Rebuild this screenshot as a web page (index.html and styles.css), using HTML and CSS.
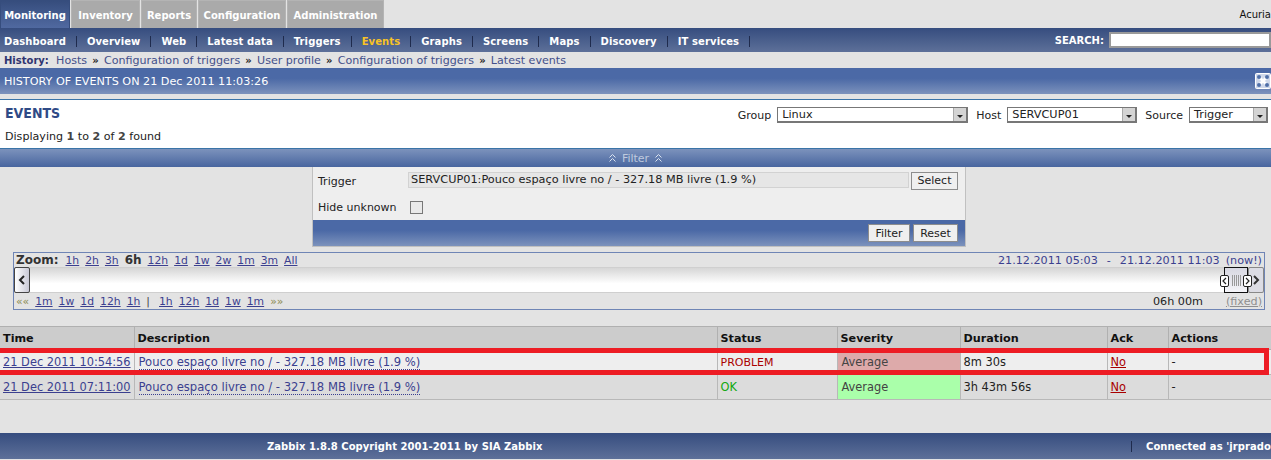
FILE: index.html
```html
<!DOCTYPE html>
<html lang="en">
<head>
  <meta charset="UTF-8">
  <title>History of events</title>
  <link rel="stylesheet" href="styles.css">
</head>
<body>
  <div class="top">
    <div class="tabs">
      <a class="tab activo" href="#">Monitoring</a>
      <a class="tab t-inventory" href="#">Inventory</a>
      <a class="tab t-reports" href="#">Reports</a>
      <a class="tab t-config" href="#">Configuration</a>
      <a class="tab t-admin" href="#">Administration</a>
    </div>
    <span class="empresa">Acuria</span>
  </div>

  <div class="subnav">
    <div class="menu">
      <a href="#">Dashboard</a>
      <a href="#">Overview</a>
      <a href="#">Web</a>
      <a href="#">Latest data</a>
      <a href="#">Triggers</a>
      <a class="actual" href="#">Events</a>
      <a href="#">Graphs</a>
      <a href="#">Screens</a>
      <a href="#">Maps</a>
      <a href="#">Discovery</a>
      <a href="#">IT services</a>
    </div>
    <div class="search">
      <label>SEARCH:</label>
      <input type="text">
    </div>
  </div>

  <div class="history">
    <strong>History:</strong>
    <a href="#">Hosts</a><b>»</b>
    <a href="#">Configuration of triggers</a><b>»</b>
    <a href="#">User profile</a><b>»</b>
    <a href="#">Configuration of triggers</a><b>»</b>
    <a href="#">Latest events</a>
  </div>

  <div class="titlebar">
    <span>HISTORY OF EVENTS ON 21 Dec 2011 11:03:26</span>
    <svg class="fullscreen" width="16" height="16" viewBox="0 0 16 16">
      <rect x="0.5" y="0.5" width="15" height="15" rx="1" fill="#cfd8ea" stroke="#fff"/>
      <path d="M3 3l10 10M13 3L3 13" stroke="#fff" stroke-width="2.500"/>
      <circle cx="4" cy="4" r="2" fill="#4f6fa8"/>
      <circle cx="12" cy="4" r="2" fill="#4f6fa8"/>
      <circle cx="4" cy="12" r="2" fill="#4f6fa8"/>
      <circle cx="12" cy="12" r="2" fill="#4f6fa8"/>
    </svg>
  </div>

  <div class="header">
    <div class="header-top">
      <h1>EVENTS</h1>
      <div class="selects">
        <label>Group</label>
        <div class="combo combo-group"><span>Linux</span><i></i></div>
        <label>Host</label>
        <div class="combo combo-host"><span>SERVCUP01</span><i></i></div>
        <label>Source</label>
        <div class="combo combo-source"><span>Trigger</span><i></i></div>
      </div>
    </div>
    <p class="found">Displaying <b>1</b> to <b>2</b> of <b>2</b> found</p>
  </div>

  <div class="filterbar">
    <svg width="7" height="8" viewBox="0 0 7 8"><path d="M.5 3.500l3-3 3 3M.5 7.500l3-3 3 3" fill="none" stroke="#dbe3f0"/></svg>
    <span>Filter</span>
    <svg width="7" height="8" viewBox="0 0 7 8"><path d="M.5 3.500l3-3 3 3M.5 7.500l3-3 3 3" fill="none" stroke="#dbe3f0"/></svg>
  </div>

  <div class="filterbox">
    <div class="filter-row fila-trigger">
      <label>Trigger</label>
      <div class="trigger-input">SERVCUP01:Pouco espaço livre no / - 327.18 MB livre (1.9 %)</div>
      <button class="btn">Select</button>
    </div>
    <div class="filter-row">
      <label>Hide unknown</label>
      <span class="check"></span>
    </div>
    <div class="filter-foot">
      <button class="btn">Filter</button>
      <button class="btn">Reset</button>
    </div>
  </div>

  <div class="zoombox">
    <div class="zoom-row fila-alta">
      <div class="zoom-links">
        <b class="zoom-label">Zoom:</b>
        <a href="#">1h</a><a href="#">2h</a><a href="#">3h</a><b class="zoom-on">6h</b><a href="#">12h</a><a href="#">1d</a><a href="#">1w</a><a href="#">2w</a><a href="#">1m</a><a href="#">3m</a><a href="#">All</a>
      </div>
      <div class="fechas"><span>21.12.2011 05:03</span><span class="guion">-</span><span>21.12.2011 11:03</span><a href="#">(now!)</a></div>
    </div>
    <div class="scroll">
      <div class="arrow arrow-left">
        <svg width="8" height="10" viewBox="0 0 8 10"><path d="M6 1L2 5l4 4" fill="none" stroke="#222" stroke-width="2"/></svg>
      </div>
      <div class="arrow arrow-right">
        <svg width="8" height="10" viewBox="0 0 8 10"><path d="M2 1l4 4-4 4" fill="none" stroke="#333" stroke-width="2"/></svg>
      </div>
      <div class="thumb">
        <span class="grip grip-l"><svg width="5" height="8" viewBox="0 0 5 8"><path d="M4 1L1 4l3 3" fill="none" stroke="#222" stroke-width="1.200"/></svg></span>
        <span class="grip grip-r"><svg width="5" height="8" viewBox="0 0 5 8"><path d="M1 1l3 3-3 3" fill="none" stroke="#222" stroke-width="1.200"/></svg></span>
      </div>
    </div>
    <div class="zoom-row fila-baja">
      <div class="zoom-links">
        <span class="raquo">««</span>
        <a href="#">1m</a><a href="#">1w</a><a href="#">1d</a><a href="#">12h</a><a href="#">1h</a><span class="sep">|</span><a href="#">1h</a><a href="#">12h</a><a href="#">1d</a><a href="#">1w</a><a href="#">1m</a>
        <span class="raquo">»»</span>
      </div>
      <div class="periodo"><span>06h 00m</span><a href="#">(fixed)</a></div>
    </div>
  </div>

  <table class="eventos">
    <colgroup>
      <col class="c-time"><col class="c-desc"><col class="c-status"><col class="c-sev"><col class="c-dur"><col class="c-ack"><col>
    </colgroup>
    <thead>
      <tr><th>Time</th><th>Description</th><th>Status</th><th>Severity</th><th>Duration</th><th>Ack</th><th>Actions</th></tr>
    </thead>
    <tbody>
      <tr class="par">
        <td><a href="#">21 Dec 2011 10:54:56</a></td>
        <td class="desc"><a class="punteado" href="#">Pouco espaço livre no / - 327.18 MB livre (1.9 %)</a></td>
        <td class="problem">PROBLEM</td>
        <td class="sev-rojo">Average</td>
        <td>8m 30s</td>
        <td><a class="rojo" href="#">No</a></td>
        <td>-</td>
      </tr>
      <tr>
        <td><a href="#">21 Dec 2011 07:11:00</a></td>
        <td class="desc"><a class="punteado" href="#">Pouco espaço livre no / - 327.18 MB livre (1.9 %)</a></td>
        <td class="ok">OK</td>
        <td class="sev-verde">Average</td>
        <td>3h 43m 56s</td>
        <td><a class="rojo" href="#">No</a></td>
        <td>-</td>
      </tr>
    </tbody>
  </table>

  <div class="marca"></div>

  <div class="footer">
    <span class="copy">Zabbix 1.8.8 Copyright 2001-2011 by SIA Zabbix</span>
    <span class="conectado">Connected as 'jrprado</span>
  </div>
</body>
</html>
```

FILE: styles.css
```css
html, body {
  margin: 0;
  height: 460px;
  overflow: hidden;
}

body {
  position: relative;
  background: #e3e3e3;
  font-family: "DejaVu Sans", Verdana, sans-serif;
  font-size: 11px;
  color: #222;
}

a {
  color: #3b3f8f;
}

/* Tabs */
.top {
  height: 28px;
  display: flex;
  justify-content: space-between;
}

.tabs {
  display: flex;
  gap: 1px;
}

.tab {
  display: block;
  box-sizing: border-box;
  height: 28px;
  line-height: 29px;
  text-align: center;
  background: #aaaaaa;
  border: 1px solid #b4b4b4;
  border-bottom: 0;
  color: #fff;
  font-weight: bold;
  text-decoration: none;
  font-size: 10px;
}

.activo {
  background: linear-gradient(#364d7d, #5069a0);
  border-color: #364d7d;
  width: 70px;
}

.t-inventory { width: 69px; }
.t-reports { width: 56px; }
.t-config { width: 88px; }
.t-admin { width: 97px; }

.empresa {
  margin-top: 9px;
  white-space: nowrap;
  font-size: 10px;
  color: #111;
}

/* Submenu */
.subnav {
  height: 24px;
  background: linear-gradient(#364d7f, #5d7099);
  display: flex;
  justify-content: space-between;
  align-items: center;
}

.menu {
  display: flex;
  padding-top: 2px;
}

.menu a {
  color: #fff;
  font-weight: bold;
  text-decoration: none;
  font-size: 10px;
  letter-spacing: 0.1px;
  line-height: 11px;
  padding: 0 10px;
  border-right: 1px solid #1f2b4d;
}

.menu a:first-child {
  padding-left: 4px;
}

.menu a.actual {
  color: #f8c325;
}

.search {
  display: flex;
  align-items: center;
  gap: 5px;
}

.search label {
  color: #fff;
  font-weight: bold;
  font-size: 10px;
}

.search input {
  box-sizing: border-box;
  width: 162px;
  height: 16px;
  margin: 0;
  padding: 0;
  border: 2px solid #9a9a9a;
  background: #fff;
}

/* Historial */
.history {
  height: 16px;
  line-height: 17px;
  padding-left: 4px;
  white-space: nowrap;
  display: flex;
  gap: 5.200px;
  font-size: 11.100px;
}

.history strong {
  color: #2f3470;
  font-size: 10px;
  margin-right: 2px;
}

.history a {
  text-decoration: none;
  color: #44508a;
}

.history b {
  color: #222;
  font-size: 10px;
}

/* Barra de titulo */
.titlebar {
  height: 26px;
  margin-bottom: 5px;
  background: linear-gradient(#4b69a6 40%, #7c92bc);
  color: #fff;
  display: flex;
  justify-content: space-between;
  align-items: center;
  padding-left: 4px;
  font-size: 11.200px;
}

.fullscreen {
  flex: none;
  margin-top: -1px;
}

/* Cabecera */
.header {
  box-sizing: border-box;
  height: 50px;
  background: #fff;
  border-top: 1px solid #3a74a8;
  border-bottom: 1px solid #3a74a8;
  padding: 0 5px;
}

.header-top {
  display: flex;
  justify-content: space-between;
  height: 30px;
}

h1 {
  margin: 5px 0 0;
  font-size: 14px;
  line-height: 16px;
  color: #2f4a86;
  font-weight: bold;
  font-family: "DejaVu Sans Condensed", "DejaVu Sans", sans-serif;
}

.selects {
  display: flex;
  align-items: center;
  gap: 6px;
  margin-right: -4px;
}

.combo {
  box-sizing: border-box;
  height: 16px;
  border: 1px solid #777;
  border-right-width: 2px;
  border-bottom-width: 2px;
  display: flex;
  justify-content: space-between;
  background: #fff;
  margin-right: 2px;
  font-size: 11.300px;
}

.combo span {
  padding-left: 4px;
  line-height: 14px;
}

.combo i {
  width: 12px;
  background: #d4d4d4;
  border-left: 1px solid #aaa;
  position: relative;
}

.combo i::after {
  content: "";
  position: absolute;
  left: 3px;
  top: 7px;
  border: 3px solid transparent;
  border-top: 3px solid #222;
  border-bottom: 0;
}

.combo-group { width: 191px; }
.combo-host { width: 130px; }
.combo-source { width: 79px; }

.found {
  margin: 0;
  line-height: 14px;
  font-size: 11.100px;
}

.found b {
  color: #444;
}

/* Filtro */
.filterbar {
  height: 18px;
  background: linear-gradient(#7c92bc, #48659f);
  color: #bfcade;
  display: flex;
  justify-content: center;
  align-items: center;
  gap: 6px;
}

.filterbox {
  box-sizing: border-box;
  width: 654px;
  height: 80px;
  margin-left: 312px;
  background: #eeeeee;
  border: 1px solid #c0c0c0;
  border-top: 0;
}

.filter-row {
  display: flex;
  align-items: center;
  height: 26px;
  padding-left: 5px;
}

.fila-trigger {
  height: 27px;
}

.fila-trigger label {
  padding-top: 2px;
}

.filter-row label {
  width: 90px;
  flex: none;
}

.trigger-input {
  box-sizing: border-box;
  width: 501px;
  height: 16px;
  line-height: 14px;
  padding-left: 2px;
  font-size: 11.300px;
  background: #e6e6e6;
  border: 1px solid #d2d2d2;
  margin-right: 2px;
  margin-top: -1px;
  white-space: nowrap;
}

.btn {
  box-sizing: border-box;
  height: 18px;
  padding: 0;
  background: #efefef;
  border: 1px solid #8d8d8d;
  font-family: inherit;
  font-size: 11px;
  color: #222;
}

.filter-row .btn {
  width: 47px;
}

.filter-foot .btn {
  width: 42px;
}

.filter-foot .btn:last-child {
  width: 45px;
}

.check {
  width: 13px;
  height: 13px;
  box-sizing: border-box;
  border: 1px solid #777;
  background: #e9e9e9;
  margin-left: 2px;
}

.filter-foot {
  height: 26px;
  background: linear-gradient(#4b69a6 40%, #7c92bc);
  display: flex;
  justify-content: flex-end;
  align-items: center;
  gap: 3px;
  padding-right: 7px;
}

/* Zoom y linea de tiempo */
.zoombox {
  box-sizing: border-box;
  height: 58px;
  margin: 5px 6px 0 13px;
  border: 1px solid #6f85b5;
}

.zoom-row {
  display: flex;
  justify-content: space-between;
  align-items: center;
  padding: 0 2px;
}

.fila-alta {
  height: 14px;
}

.fila-baja {
  height: 16px;
}

.zoom-links {
  display: flex;
  align-items: center;
  gap: 6px;
  font-size: 10.800px;
}

.zoom-label {
  font-size: 12px;
  margin-right: 1px;
  color: #333;
}

.zoom-on {
  font-size: 12px;
  color: #333;
}

.raquo {
  color: #8a8a50;
}

.sep {
  color: #444;
  margin: 0 3px 0 0;
}

.fechas {
  display: flex;
  gap: 6px;
  color: #3b3f8f;
  font-size: 11.200px;
}

.guion {
  margin: 0 3px;
}

.fechas a {
  text-decoration: none;
}

.periodo {
  display: flex;
  gap: 23px;
  font-size: 11.200px;
}

.periodo a {
  color: #8f8f8f;
}

.scroll {
  position: relative;
  height: 24px;
  background: linear-gradient(#d6d6d6, #fff 65%);
  border-top: 1px solid #cfcfcf;
  border-bottom: 1px solid #cfcfcf;
}

.arrow {
  position: absolute;
  top: -1px;
  box-sizing: border-box;
  width: 16px;
  height: 26px;
  border: 1px solid #444;
  border-radius: 2px;
  background: linear-gradient(to right, #fff, #c9c9d6);
  display: flex;
  justify-content: center;
  align-items: center;
}

.arrow-left {
  left: 0;
}

.arrow-right {
  right: 0;
  border-color: #888;
  background: #dcdce4;
}

.thumb {
  position: absolute;
  top: -1px;
  right: 16px;
  width: 24px;
  height: 26px;
  box-sizing: border-box;
  border: 1px solid #111;
  background: linear-gradient(#d8d8e2, #f4f4f8);
}

.thumb::before {
  content: "";
  position: absolute;
  left: 7px;
  top: 7px;
  width: 9px;
  height: 11px;
  background: repeating-linear-gradient(to right, #999 0 1px, transparent 1px 2px);
}

.grip {
  position: absolute;
  top: 7px;
  box-sizing: border-box;
  width: 9px;
  height: 12px;
  border: 1px solid #222;
  border-radius: 2px;
  background: #fff;
  display: flex;
  justify-content: center;
  align-items: center;
}

.grip-l { left: -5px; }
.grip-r { right: -5px; }

/* Tabla de eventos */
.eventos {
  width: 100%;
  margin-top: 16px;
  border-collapse: collapse;
  table-layout: fixed;
  font-size: 11.400px;
}

.c-time { width: 134px; }
.c-desc { width: 583px; }
.c-status { width: 120px; }
.c-sev { width: 123px; }
.c-dur { width: 147px; }
.c-ack { width: 61px; }

.eventos th {
  height: 22px;
  padding: 0 3px;
  text-align: left;
  background: #cccccc;
  font-size: 11.200px;
  color: #111;
  border: 1px solid #b0b0b0;
}

.eventos td {
  height: 24px;
  padding: 0 3px;
  background: #dcdcdc;
  border: 1px solid #b8b8b8;
  white-space: nowrap;
}

.eventos tr.par td {
  background: #eeeeee;
}

.eventos th:first-child, .eventos td:first-child {
  border-left: 0;
}

.eventos th:last-child, .eventos td:last-child {
  border-right: 0;
}

.eventos td.desc {
  padding-left: 4px;
  font-size: 11.600px;
}

.punteado {
  text-decoration: none;
  border-bottom: 1px dotted #3b3f8f;
}

.rojo {
  color: #a80000;
}

.eventos td.problem {
  color: #aa0000;
  font-size: 11px;
}

.ok {
  color: #10a810;
}

.eventos tr td.sev-rojo {
  background: #ddaaaa;
  color: #444;
  padding-left: 4px;
}

.eventos tr td.sev-verde {
  background: #aaffaa;
  color: #444;
  padding-left: 4px;
}

/* Recuadro rojo puesto encima de la captura */
.marca {
  position: absolute;
  left: -5px;
  top: 348px;
  width: 1274px;
  height: 27px;
  box-sizing: border-box;
  border: 5px solid #ed1c24;
  pointer-events: none;
}

/* Pie */
.footer {
  position: absolute;
  left: 0;
  right: 0;
  top: 433px;
  height: 26px;
  background: linear-gradient(#364d7f, #5d7099);
  color: #fff;
  font-weight: bold;
  font-size: 10px;
  letter-spacing: 0.05px;
  line-height: 27px;
  white-space: nowrap;
}

.copy {
  position: absolute;
  left: 267px;
}

.conectado {
  position: absolute;
  left: 1131px;
  top: 8px;
  padding-left: 14px;
  border-left: 1px solid #1f2b4d;
  line-height: 11px;
}
```
